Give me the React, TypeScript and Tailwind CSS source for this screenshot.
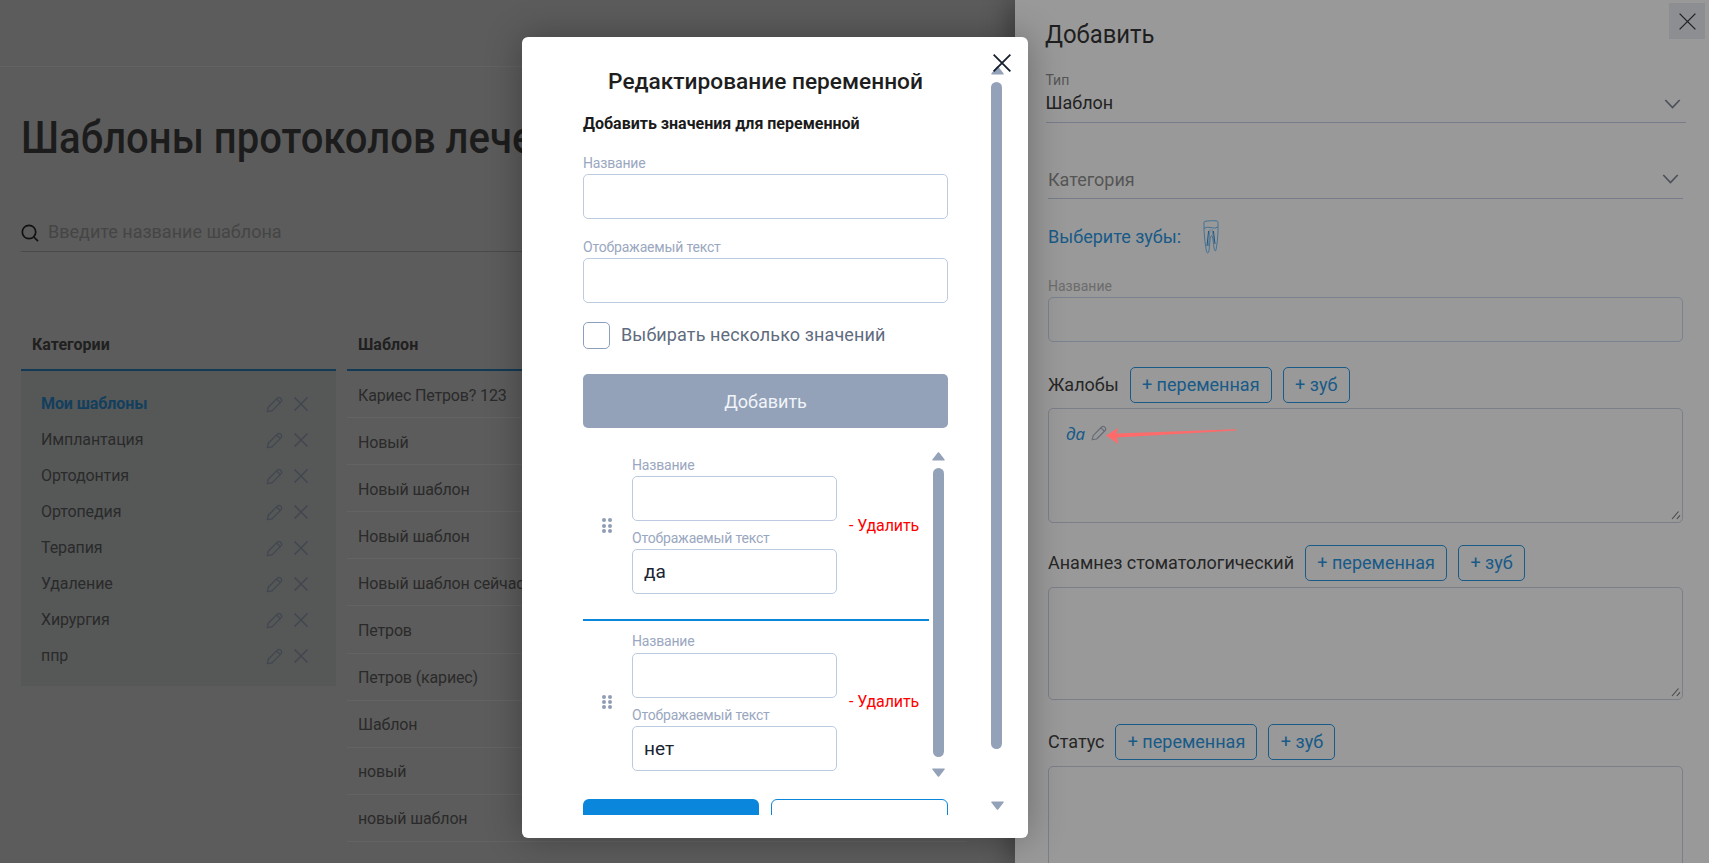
import React from "react";

const Pencil = ({ c = "#41464f", s = 17 }: { c?: string; s?: number }) => (
  <svg width={s} height={s} viewBox="0 0 16 16" fill="none" stroke={c} strokeWidth="1.15" strokeLinejoin="round">
    <path d="M1.2 14.8 L2.2 10.6 L10.6 2 Q12 .8 13.4 1.8 L14.4 2.8 Q15.3 4.2 14.1 5.5 L5.6 14 Z" />
    <path d="M10 2.8 L13.4 6.2" />
  </svg>
);
const Cross = ({ c = "#41464f", s = 14, w = 1.5 }: { c?: string; s?: number; w?: number }) => (
  <svg width={s} height={s} viewBox="0 0 14 14" fill="none" stroke={c} strokeWidth={w}>
    <path d="M.5 .5 L13.5 13.5 M13.5 .5 L.5 13.5" />
  </svg>
);
const Chevron = () => (
  <svg width="17" height="10" viewBox="0 0 16 10" fill="none" stroke="#4c5159" strokeWidth="1.7">
    <path d="M.8 1 L8 8.6 L15.2 1" />
  </svg>
);
const Tri = ({ down = false }: { down?: boolean }) => (
  <svg width="13" height="9" viewBox="0 0 13 9" fill="#93a2b9">
    {down ? <path d="M.8 .5 H12.2 Q13 .5 12.6 1.4 L7.2 8.4 Q6.5 9 5.8 8.4 L.4 1.4 Q0 .5 .8 .5 Z" /> : <path d="M.8 8.5 H12.2 Q13 8.5 12.6 7.6 L7.2 .6 Q6.5 0 5.8 .6 L.4 7.6 Q0 8.5 .8 8.5 Z" />}
  </svg>
);
const Dots = () => (
  <div className="grid w-[10px] grid-cols-2 gap-x-[2px] gap-y-[1.4px]">
    {[0, 1, 2, 3, 4, 5].map((i) => (
      <span key={i} className="block h-[4px] w-[4px] rounded-full bg-[#8f9db5]" />
    ))}
  </div>
);
const Tooth = () => (
  <svg width="16" height="35" viewBox="0 0 16 35" fill="none" stroke="#2f6a96" strokeWidth="0.8" strokeLinejoin="round">
    <path d="M1 2.4 Q1.2 1.2 3 1.2 Q9 .4 13.4 .8 Q15 1 15 2.6 L15 12 Q14.6 22 13 30 Q12 32.4 11 28 L9.8 18 Q8.4 13.5 7.2 18 L6 31 Q4.6 35 3.4 31 Q1.4 20 1 10 Z" />
    <path d="M1 8.4 Q4 6.4 8 7.6 Q12 9 15 7" />
    <path d="M5.6 11 L4 26 M10.4 11 L12 24" strokeWidth="1" stroke="#1f5580" />
    <path d="M7 9.5 L5.4 26 M9 9.5 L11 22" strokeWidth="0.6" />
  </svg>
);
const Grip = () => (
  <svg className="pointer-events-none absolute bottom-[3px] right-[2px]" width="10" height="10" viewBox="0 0 10 10" fill="none" stroke="#474747" strokeWidth="1.1">
    <path d="M1 9 L7.5 1.5 M5.8 9 L9 5.4" />
  </svg>
);

const Modalinput = ({ value = "" }: { value?: string }) => (
  <input
    readOnly
    value={value}
    className="block h-[45px] w-full rounded-[5px] border border-[#bccbe0] bg-white px-[11px] text-[19px] text-[#1a2533] outline-none"
  />
);
const MLabel = ({ children, cls = "" }: { children: React.ReactNode; cls?: string }) => (
  <div className={"text-[14px] leading-[16px] tracking-[-0.18px] text-[#9aa7c0] " + cls}>{children}</div>
);

const categories = ["Имплантация", "Ортодонтия", "Ортопедия", "Терапия", "Удаление", "Хирургия", "ппр"];
const templates = [
  "Кариес Петров? 123",
  "Новый",
  "Новый шаблон",
  "Новый шаблон",
  "Новый шаблон сейчас",
  "Петров",
  "Петров (кариес)",
  "Шаблон",
  "новый",
  "новый шаблон",
];

const CatRow = ({ name, active = false }: { name: string; active?: boolean }) => (
  <div className="flex h-[36px] items-center pl-[20px] pr-[28px]">
    <span className={active ? "text-[16px] font-bold tracking-[-0.1px] text-[#123f5e]" : "text-[16px] tracking-[-0.1px] text-[#2a2a2a]"}>{name}</span>
    <span className="ml-auto mr-[11px]">
      <Pencil />
    </span>
    <Cross />
  </div>
);

const FieldRow = ({ label, mt }: { label: string; mt: string }) => (
  <div className={"flex h-[36px] items-center " + mt}>
    <span className="pb-[2px] text-[18px] text-[#262626]">{label}</span>
    <button className="ml-[11px] h-[36px] w-[142px] rounded-[5px] border border-[#185a88] pb-[2px] text-[18px] text-[#185a88]">+ переменная</button>
    <button className="ml-[11px] h-[36px] w-[67px] rounded-[5px] border border-[#185a88] pb-[2px] text-[18px] text-[#185a88]">+ зуб</button>
  </div>
);

const Area = ({ h, mt, children }: { h: string; mt: string; children?: React.ReactNode }) => (
  <div className={"relative w-[635px] " + h + " " + mt}>
    <textarea readOnly className="block h-full w-full resize-none rounded-[5px] border border-[#7a7f88] bg-transparent outline-none" />
    <Grip />
    {children}
  </div>
);

const ListItem = ({ value, cls, gap }: { value: string; cls: string; gap: string }) => (
  <div className={"flex items-center pl-[19px] " + cls}>
    <Dots />
    <div className="ml-[20px] w-[205px]">
      <MLabel>Название</MLabel>
      <div className={gap}>
        <Modalinput />
      </div>
      <MLabel cls="mt-[9px]">Отображаемый текст</MLabel>
      <div className="mt-[3px]">
        <Modalinput value={value} />
      </div>
    </div>
    <span className="ml-[12px] text-[16px] tracking-[-0.1px] text-[#ff0000]">- Удалить</span>
  </div>
);

export default function App() {
  return (
    <div className="relative h-screen w-full overflow-hidden bg-[#5c5c5c] font-[family-name:Roboto,sans-serif]">
      {/* page */}
      <div className="h-[67px] border-b border-[#626262]" />
      <div className="pl-[21px]">
        <h1 className="mt-[46px] origin-left scale-x-[0.89] whitespace-nowrap text-[45px] font-medium leading-[50px] text-[#1c1c1c]">Шаблоны протоколов лечения</h1>
        <div className="mt-[51px] flex h-[38px] w-[960px] items-center border-b border-[#4a4a4a]">
          <svg width="18" height="18" viewBox="0 0 18 18" fill="none" stroke="#111" strokeWidth="1.7">
            <circle cx="8" cy="8" r="6.7" />
            <path d="M12.8 13 L17 17.2" />
          </svg>
          <span className="ml-[9px] pb-[2px] text-[18px] text-[#454545]">Введите название шаблона</span>
        </div>
        <div className="mt-[68px] flex gap-[11px]">
          <div className="w-[315px]">
            <div className="flex h-[51px] items-center border-b-2 border-[#123a54] pl-[11px] text-[16px] font-bold text-[#202020]">Категории</div>
            <div className="bg-[#565858] pb-[12px] pt-[15px]">
              <CatRow name="Мои шаблоны" active />
              {categories.map((c) => (
                <CatRow key={c} name={c} />
              ))}
            </div>
          </div>
          <div className="w-[620px]">
            <div className="flex h-[51px] items-center border-b-2 border-[#123a54] pl-[11px] text-[16px] font-bold text-[#202020]">Шаблон</div>
            {templates.map((t, i) => (
              <div key={i} className="flex h-[47.1px] items-center border-b border-[#636363] pl-[11px] pt-[3px] text-[16px] tracking-[-0.15px] text-[#2a2a2a]">
                {t}
              </div>
            ))}
          </div>
        </div>
      </div>

      {/* drawer */}
      <div className="absolute bottom-0 right-0 top-0 w-[694px] overflow-hidden bg-[#999999] pl-[33px] shadow-[-6px_0_24px_rgba(0,0,0,0.35)]">
        <button className="absolute right-[4px] top-[3px] flex h-[36px] w-[36px] items-center justify-center bg-[#8d8e92]">
          <Cross c="#222" s={17} w={1.1} />
        </button>
        <div className="-ml-[2.5px] w-[640px]">
          <div className="-ml-[1px] origin-left scale-x-[0.9] pt-[19px] text-[26.5px] leading-[30px] text-[#1f1f1f]">Добавить</div>
          <div className="mt-[23px] text-[14px] leading-[16px] text-[#555]">Тип</div>
          <div className="mt-[3px] flex items-center justify-between border-b border-[#767c8a] pb-[7px] pr-[5px] text-[18px] leading-[24px] text-[#222]">
            Шаблон
            <span className="pt-[2px]">
              <Chevron />
            </span>
          </div>
        </div>
        <div className="mt-[45px] flex w-[635px] items-center justify-between border-b border-[#767c8a] pb-[6px] pr-[4px] text-[18px] leading-[24px] text-[#555]">
          Категория
          <span className="pb-[2px]">
            <Chevron />
          </span>
        </div>
        <div className="mt-[21px] flex h-[34px] items-center text-[18px] text-[#185a88]">
          <span className="pb-[2px]">Выберите зубы:</span>
          <span className="ml-[22px]">
            <Tooth />
          </span>
        </div>
        <div className="mt-[24px] text-[14px] leading-[16px] text-[#6c6c6c]">Название</div>
        <div className="mt-[3px] h-[45px] w-[635px] rounded-[5px] border border-[#7a8290]" />
        <FieldRow label="Жалобы" mt="mt-[25px]" />
        <Area h="h-[115px]" mt="mt-[5px]">
          <span className="absolute left-[18px] top-[16px] font-[family-name:'Noto_Sans',sans-serif] text-[17px] italic leading-[20px] text-[#185a88]">да</span>
          <span className="absolute left-[43px] top-[17px]">
            <Pencil c="#666b76" s={16} />
          </span>
          <svg className="absolute left-[57px] top-[18px]" width="132" height="20" viewBox="0 0 132 20" fill="#ff6b6b">
            <path d="M1 9.5 L13 2 L11.5 7.4 L131 3.2 L131 4.6 L12 11.5 L13.5 18 Z" />
          </svg>
        </Area>
        <FieldRow label="Анамнез стоматологический" mt="mt-[22px]" />
        <Area h="h-[113px]" mt="mt-[6px]" />
        <FieldRow label="Статус" mt="mt-[24px]" />
        <Area h="h-[200px]" mt="mt-[6px]" />
      </div>

      {/* modal */}
      <div className="absolute left-[522px] top-[37px] h-[801px] w-[506px] rounded-[6px] bg-white shadow-[0_0_36px_rgba(0,0,0,0.3)]">
        <div className="h-[778px] overflow-hidden pl-[61px] pt-[31px]">
          <div className="w-[365px]">
            <div className="text-center text-[22.7px] font-medium leading-[28px] text-[#1e1e1e]">Редактирование переменной</div>
            <div className="mt-[18px] text-[16px] font-bold leading-[20px] text-[#1b1b1b]">Добавить значения для переменной</div>
            <MLabel cls="mt-[21px]">Название</MLabel>
            <div className="mt-[3px]">
              <Modalinput />
            </div>
            <MLabel cls="mt-[20px]">Отображаемый текст</MLabel>
            <div className="mt-[3px]">
              <Modalinput />
            </div>
            <div className="mt-[19px] flex h-[27px] items-center">
              <span className="block h-[27px] w-[27px] rounded-[5px] border border-[#8d9fbe]" />
              <span className="ml-[11px] pb-[2px] text-[18px] tracking-[0.12px] text-[#606c7e]">Выбирать несколько значений</span>
            </div>
            <button className="mt-[25px] block h-[54px] w-full rounded-[5px] bg-[#93a2b9] text-[18px] text-[#f1f4f8]">Добавить</button>
            <div className="mt-[29px] w-[346px]">
              <ListItem value="да" cls="border-b-2 border-[#0a87dd] pb-[25px]" gap="mt-[3px]" />
              <ListItem value="нет" cls="pt-[12px]" gap="mt-[4px]" />
            </div>
            <div className="mt-[28px] flex gap-[12px]">
              <button className="h-[54px] flex-1 rounded-[6px] bg-[#0a87dd]" />
              <button className="h-[54px] flex-1 rounded-[6px] border border-[#0a87dd]" />
            </div>
          </div>
        </div>

        {/* outer scrollbar */}
        <div className="absolute left-[469px] top-[29px] flex flex-col items-center">
          <Tri />
        </div>
        <div className="absolute left-[469px] top-[45px] h-[667px] w-[11px] rounded-full bg-[#93a2b9]" />
        <div className="absolute left-[469px] top-[764px]">
          <Tri down />
        </div>
        {/* inner scrollbar */}
        <div className="absolute left-[410px] top-[415px]">
          <Tri />
        </div>
        <div className="absolute left-[411px] top-[431px] h-[289px] w-[11px] rounded-full bg-[#93a2b9]" />
        <div className="absolute left-[410px] top-[731px]">
          <Tri down />
        </div>
        <div className="absolute left-[471px] top-[17px]">
          <Cross c="#16202c" s={18} w={1.4} />
        </div>
      </div>
    </div>
  );
}
